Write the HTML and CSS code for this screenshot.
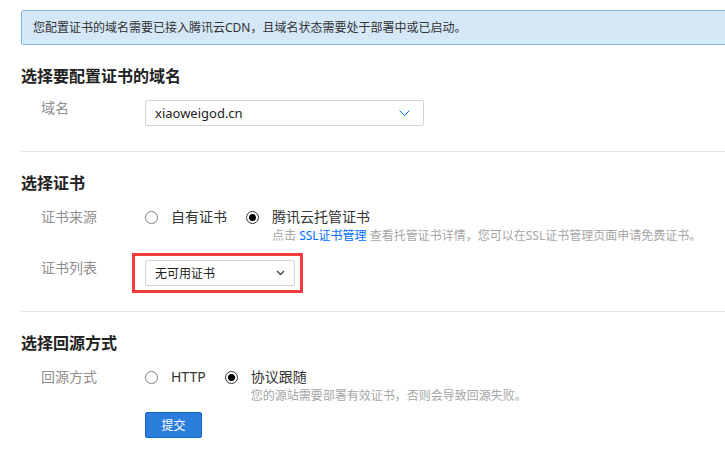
FILE: index.html
```html
<!DOCTYPE html>
<html lang="zh-CN">
<head>
    <meta charset="UTF-8">
    <meta name="viewport" content="width=device-width, initial-scale=1.0">
    <title>配置证书</title>
    <link rel="stylesheet" href="styles.css">
</head>
<body>
    <div class="page">
        <div class="notice">您配置证书的域名需要已接入腾讯云CDN，且域名状态需要处于部署中或已启动。</div>

        <div class="section">
            <h3 class="section-title">选择要配置证书的域名</h3>
            <div class="form-row row-first">
                <label class="form-label label-select">域名</label>
                <div class="select select-domain">
                    <span>xiaoweigod.cn</span>
                    <svg width="11" height="6" viewBox="0 0 11 6"><path d="M0.5 0.5 L5.5 5.5 L10.5 0.5" fill="none" stroke="#006eff" stroke-width="1"/></svg>
                </div>
            </div>
        </div>

        <div class="section">
            <h3 class="section-title">选择证书</h3>
            <div class="form-row">
                <label class="form-label">证书来源</label>
                <div class="radio-group">
                    <div class="radio-item">
                        <div class="radio-line"><span class="radio"></span>自有证书</div>
                    </div>
                    <div class="radio-item">
                        <div class="radio-line"><span class="radio checked"></span>腾讯云托管证书</div>
                        <p class="hint">点击 <a href="#">SSL证书管理</a> 查看托管证书详情，您可以在SSL证书管理页面申请免费证书。</p>
                    </div>
                </div>
            </div>
            <div class="form-row row-cert">
                <label class="form-label label-select">证书列表</label>
                <div class="mark">
                    <div class="select select-cert">
                        <span>无可用证书</span>
                        <svg width="9" height="6" viewBox="0 0 9 6"><path d="M1 1 L4.5 4.5 L8 1" fill="none" stroke="#444" stroke-width="1.3"/></svg>
                    </div>
                </div>
            </div>
        </div>

        <div class="section last">
            <h3 class="section-title">选择回源方式</h3>
            <div class="form-row">
                <label class="form-label">回源方式</label>
                <div class="radio-group">
                    <div class="radio-item">
                        <div class="radio-line"><span class="radio"></span>HTTP</div>
                    </div>
                    <div class="radio-item">
                        <div class="radio-line"><span class="radio checked"></span>协议跟随</div>
                        <p class="hint">您的源站需要部署有效证书，否则会导致回源失败。</p>
                    </div>
                </div>
            </div>
            <div class="form-row">
                <span class="form-label"></span>
                <button class="submit-btn">提交</button>
            </div>
        </div>
    </div>
</body>
</html>
```

FILE: styles.css
```css
body {
    margin: 0;
    font-family: "Noto Sans", "Noto Sans CJK SC", sans-serif;
    background: #fff;
    color: #333;
    overflow: hidden;
}
.page {
    padding: 10px 0 0 21px;
}
.notice {
    background: #d5e8f8;
    border: 1px solid #84b6e6;
    border-radius: 2px;
    color: #333;
    font-size: 12px;
    line-height: 33px;
    padding-left: 11px;
    margin-right: -10px;
    white-space: nowrap;
}
.section {
    padding: 19px 0 25px;
    border-bottom: 1px solid #e5e5e5;
}
.section.last {
    border-bottom: none;
}
.section-title {
    margin: 0 0 12px;
    font-size: 16px;
    line-height: 24px;
    font-weight: bold;
    color: #222;
}
.form-row {
    display: flex;
    padding-left: 20px;
}
.row-first {
    margin-top: 2px;
}
.row-cert {
    margin-top: 15px;
}
.form-label {
    width: 104px;
    flex-shrink: 0;
    font-size: 14px;
    line-height: 20px;
    color: #8f8f8f;
}
.label-select {
    line-height: 16px;
}
.select {
    box-sizing: border-box;
    height: 26px;
    display: flex;
    align-items: center;
    justify-content: space-between;
    border: 1px solid #d4d4d4;
    border-radius: 2px;
    background: #fff;
    padding-left: 9px;
    color: #222;
    font-size: 12px;
}
.select-domain {
    width: 279px;
    padding-right: 13px;
    font-size: 13px;
}
.select-cert {
    width: 150px;
    padding-right: 9px;
}
.mark {
    position: relative;
}
.mark::after {
    content: "";
    position: absolute;
    left: -13px;
    top: -7px;
    right: -8px;
    bottom: -7px;
    border: 3px solid #f23d3d;
}
.radio-group {
    display: flex;
}
.radio-item {
    margin-right: 19px;
}
.radio-line {
    display: flex;
    align-items: center;
    font-size: 14px;
    line-height: 20px;
    color: #333;
}
.radio {
    box-sizing: border-box;
    flex: 0 0 13px;
    width: 13px;
    height: 13px;
    border: 1px solid #808080;
    border-radius: 50%;
    margin-right: 13px;
    display: flex;
    align-items: center;
    justify-content: center;
}
.radio.checked {
    border-color: #333;
}
.radio.checked::after {
    content: "";
    width: 7px;
    height: 7px;
    border-radius: 50%;
    background: #000;
}
.hint {
    margin: 0 0 0 26px;
    font-size: 12px;
    line-height: 18px;
    color: #a6a6a6;
    white-space: nowrap;
}
.hint a {
    color: #006eff;
    text-decoration: none;
}
.submit-btn {
    margin-top: 7px;
    width: 57px;
    height: 26px;
    border: 1px solid #1765c6;
    border-radius: 2px;
    background: #2a7ddb;
    color: #fff;
    font-family: inherit;
    font-size: 12px;
    cursor: pointer;
}
```
